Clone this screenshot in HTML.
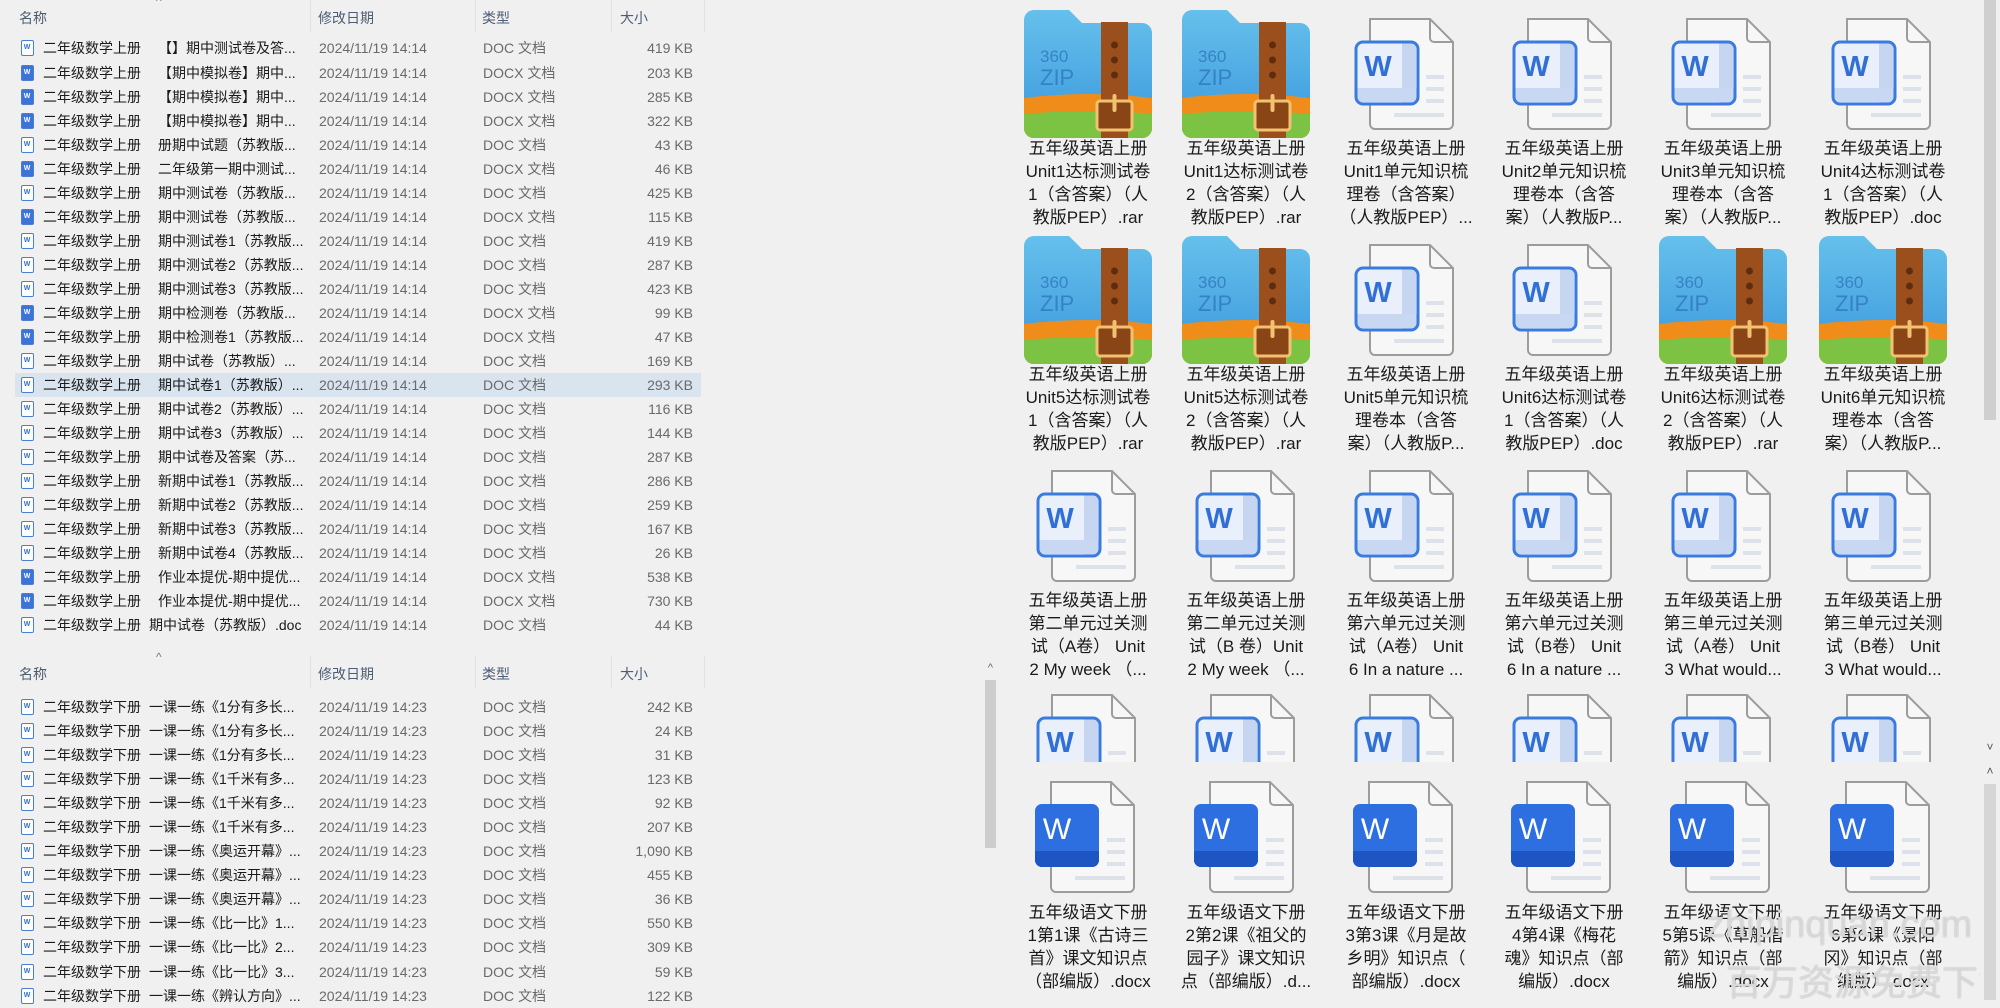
<!DOCTYPE html>
<html><head><meta charset="utf-8"><style>
*{margin:0;padding:0;box-sizing:border-box}
body{width:2000px;height:1000px;background:#f0f0f0;position:relative;overflow:hidden;font-family:"Liberation Sans","Noto Sans CJK SC",sans-serif}
.h{position:absolute;left:0;width:710px;height:34px;font-size:14px;color:#4d5d73}
.h span{position:absolute;top:8px}
.h b{position:absolute;top:0;width:1px;height:32px;background:#e2e2e2}
.h i{position:absolute;left:156px;top:-6px;font-style:normal;font-size:12px;color:#777}
.r{position:absolute;left:15px;width:686px;height:24px;font-size:14px;line-height:24px;white-space:nowrap}
.r.sel{background:#d9e4ee}
.r span{position:absolute;top:0}
.n1{left:28px;color:#1a1a1a}.n2{left:143px;color:#1a1a1a}
.dt{left:304px;color:#6a6a6a}.ty{left:468px;color:#6a6a6a}.sz{right:8px;color:#6a6a6a}
.ic{position:absolute;left:6px;top:4px;width:13px;height:16px;border:1.5px solid #4a7fd0;border-radius:2px;background:#fff}
.ic::after{content:"W";position:absolute;left:1px;top:2px;width:8px;height:9px;font:bold 7px/9px "Liberation Sans";color:#2f6fd6;text-align:center}
.ic.x{background:#3b74d6}.ic.x::after{color:#fff;background:#3b74d6}
.t{position:absolute;width:160px;text-align:center;font-size:17px;line-height:23px;color:#1a1a1a;white-space:nowrap}
.i{position:absolute}
</style></head><body>
<svg width="0" height="0" style="position:absolute">
<defs>
<linearGradient id="bg" x1="0" y1="0" x2="0" y2="1"><stop offset="0" stop-color="#66c0ec"/><stop offset="1" stop-color="#3a97dc"/></linearGradient>
<clipPath id="fc"><path d="M0 10a10 10 0 0 1 10-10H45L58 13H118a10 10 0 0 1 10 10V118a10 10 0 0 1-10 10H10a10 10 0 0 1-10-10Z"/></clipPath>
<symbol id="zip" viewBox="0 0 128 128">
<g clip-path="url(#fc)">
<rect width="128" height="128" fill="url(#bg)"/>
<path d="M0 88Q64 80 128 88V128H0Z" fill="#f08c1a"/>
<path d="M0 104Q64 98 128 104V128H0Z" fill="#7cc243"/>
</g>
<text x="16" y="52" font-family="Liberation Sans" font-size="17" fill="#2f78bd" opacity=".8">360</text>
<text x="16" y="75" font-family="Liberation Sans" font-size="22" fill="#2f78bd" opacity=".8">ZIP</text>
<rect x="77" y="12" width="27" height="116" fill="#9b4f1d"/>
<circle cx="90.5" cy="35" r="3.5" fill="#5e2c0e"/><circle cx="90.5" cy="50" r="3.5" fill="#5e2c0e"/><circle cx="90.5" cy="65" r="3.5" fill="#5e2c0e"/>
<rect x="73" y="91" width="35" height="29" rx="3" fill="#8a4516" stroke="#f2c270" stroke-width="3"/>
<rect x="88.5" y="84" width="4" height="18" rx="2" fill="#f2c270"/>
</symbol>
<symbol id="doc" viewBox="0 0 100 112">
<path d="M16 1H76L99 24V106a5 5 0 0 1-5 5H21a5 5 0 0 1-5-5Z" fill="#f7f7f7" stroke="#9c9c9c" stroke-width="2"/>
<path d="M76 1V20a4 4 0 0 0 4 4H99" fill="none" stroke="#9c9c9c" stroke-width="2"/>
<rect x="72" y="57" width="18" height="4" fill="#dde2ea"/><rect x="72" y="69" width="18" height="4" fill="#dde2ea"/><rect x="72" y="81" width="18" height="4" fill="#dde2ea"/><rect x="40" y="95" width="50" height="4" fill="#dde2ea"/>
<rect x="2" y="24" width="62" height="62" rx="7" fill="#eaf0fb"/>
<rect x="48" y="25.5" width="14" height="59" fill="#c6d6f1"/>
<rect x="3.5" y="70" width="59" height="14" fill="#c9d8f2"/>
<rect x="2" y="24" width="62" height="62" rx="7" fill="none" stroke="#3a7be0" stroke-width="3"/>
<text x="24" y="58" text-anchor="middle" font-family="Liberation Sans" font-weight="bold" font-size="29" fill="#2f6fd6">W</text>
</symbol>
<symbol id="docx" viewBox="0 0 100 112">
<path d="M16 1H76L99 24V106a5 5 0 0 1-5 5H21a5 5 0 0 1-5-5Z" fill="#f7f7f7" stroke="#9c9c9c" stroke-width="2"/>
<path d="M76 1V20a4 4 0 0 0 4 4H99" fill="none" stroke="#9c9c9c" stroke-width="2"/>
<rect x="72" y="57" width="18" height="4" fill="#dde2ea"/><rect x="72" y="69" width="18" height="4" fill="#dde2ea"/><rect x="72" y="81" width="18" height="4" fill="#dde2ea"/><rect x="40" y="95" width="50" height="4" fill="#dde2ea"/>
<rect x="0" y="23" width="64" height="63" rx="7" fill="#2d6fe0"/>
<path d="M0 70H64V79a7 7 0 0 1-7 7H7a7 7 0 0 1-7-7Z" fill="#1d55c3"/>
<text x="22" y="58" text-anchor="middle" font-family="Liberation Sans" font-size="30" fill="#fff">W</text>
</symbol>
</defs></svg>

<div class="h" style="top:0"><i>^</i><span style="left:19px">名称</span><span style="left:318px">修改日期</span><span style="left:482px">类型</span><span style="left:620px">大小</span><b style="left:310px"></b><b style="left:475px"></b><b style="left:611px"></b><b style="left:704px"></b></div>

<div class="r" style="top:36px"><i class="ic"></i><span class="n1">二年级数学上册</span><span class="n2">【】期中测试卷及答...</span><span class="dt">2024/11/19 14:14</span><span class="ty">DOC 文档</span><span class="sz">419 KB</span></div>
<div class="r" style="top:61px"><i class="ic x"></i><span class="n1">二年级数学上册</span><span class="n2">【期中模拟卷】期中...</span><span class="dt">2024/11/19 14:14</span><span class="ty">DOCX 文档</span><span class="sz">203 KB</span></div>
<div class="r" style="top:85px"><i class="ic x"></i><span class="n1">二年级数学上册</span><span class="n2">【期中模拟卷】期中...</span><span class="dt">2024/11/19 14:14</span><span class="ty">DOCX 文档</span><span class="sz">285 KB</span></div>
<div class="r" style="top:109px"><i class="ic x"></i><span class="n1">二年级数学上册</span><span class="n2">【期中模拟卷】期中...</span><span class="dt">2024/11/19 14:14</span><span class="ty">DOCX 文档</span><span class="sz">322 KB</span></div>
<div class="r" style="top:133px"><i class="ic"></i><span class="n1">二年级数学上册</span><span class="n2">册期中试题（苏教版...</span><span class="dt">2024/11/19 14:14</span><span class="ty">DOC 文档</span><span class="sz">43 KB</span></div>
<div class="r" style="top:157px"><i class="ic x"></i><span class="n1">二年级数学上册</span><span class="n2">二年级第一期中测试...</span><span class="dt">2024/11/19 14:14</span><span class="ty">DOCX 文档</span><span class="sz">46 KB</span></div>
<div class="r" style="top:181px"><i class="ic"></i><span class="n1">二年级数学上册</span><span class="n2">期中测试卷（苏教版...</span><span class="dt">2024/11/19 14:14</span><span class="ty">DOC 文档</span><span class="sz">425 KB</span></div>
<div class="r" style="top:205px"><i class="ic x"></i><span class="n1">二年级数学上册</span><span class="n2">期中测试卷（苏教版...</span><span class="dt">2024/11/19 14:14</span><span class="ty">DOCX 文档</span><span class="sz">115 KB</span></div>
<div class="r" style="top:229px"><i class="ic"></i><span class="n1">二年级数学上册</span><span class="n2">期中测试卷1（苏教版...</span><span class="dt">2024/11/19 14:14</span><span class="ty">DOC 文档</span><span class="sz">419 KB</span></div>
<div class="r" style="top:253px"><i class="ic"></i><span class="n1">二年级数学上册</span><span class="n2">期中测试卷2（苏教版...</span><span class="dt">2024/11/19 14:14</span><span class="ty">DOC 文档</span><span class="sz">287 KB</span></div>
<div class="r" style="top:277px"><i class="ic"></i><span class="n1">二年级数学上册</span><span class="n2">期中测试卷3（苏教版...</span><span class="dt">2024/11/19 14:14</span><span class="ty">DOC 文档</span><span class="sz">423 KB</span></div>
<div class="r" style="top:301px"><i class="ic x"></i><span class="n1">二年级数学上册</span><span class="n2">期中检测卷（苏教版...</span><span class="dt">2024/11/19 14:14</span><span class="ty">DOCX 文档</span><span class="sz">99 KB</span></div>
<div class="r" style="top:325px"><i class="ic x"></i><span class="n1">二年级数学上册</span><span class="n2">期中检测卷1（苏教版...</span><span class="dt">2024/11/19 14:14</span><span class="ty">DOCX 文档</span><span class="sz">47 KB</span></div>
<div class="r" style="top:349px"><i class="ic"></i><span class="n1">二年级数学上册</span><span class="n2">期中试卷（苏教版）...</span><span class="dt">2024/11/19 14:14</span><span class="ty">DOC 文档</span><span class="sz">169 KB</span></div>
<div class="r sel" style="top:373px"><i class="ic"></i><span class="n1">二年级数学上册</span><span class="n2">期中试卷1（苏教版）...</span><span class="dt">2024/11/19 14:14</span><span class="ty">DOC 文档</span><span class="sz">293 KB</span></div>
<div class="r" style="top:397px"><i class="ic"></i><span class="n1">二年级数学上册</span><span class="n2">期中试卷2（苏教版）...</span><span class="dt">2024/11/19 14:14</span><span class="ty">DOC 文档</span><span class="sz">116 KB</span></div>
<div class="r" style="top:421px"><i class="ic"></i><span class="n1">二年级数学上册</span><span class="n2">期中试卷3（苏教版）...</span><span class="dt">2024/11/19 14:14</span><span class="ty">DOC 文档</span><span class="sz">144 KB</span></div>
<div class="r" style="top:445px"><i class="ic"></i><span class="n1">二年级数学上册</span><span class="n2">期中试卷及答案（苏...</span><span class="dt">2024/11/19 14:14</span><span class="ty">DOC 文档</span><span class="sz">287 KB</span></div>
<div class="r" style="top:469px"><i class="ic"></i><span class="n1">二年级数学上册</span><span class="n2">新期中试卷1（苏教版...</span><span class="dt">2024/11/19 14:14</span><span class="ty">DOC 文档</span><span class="sz">286 KB</span></div>
<div class="r" style="top:493px"><i class="ic"></i><span class="n1">二年级数学上册</span><span class="n2">新期中试卷2（苏教版...</span><span class="dt">2024/11/19 14:14</span><span class="ty">DOC 文档</span><span class="sz">259 KB</span></div>
<div class="r" style="top:517px"><i class="ic"></i><span class="n1">二年级数学上册</span><span class="n2">新期中试卷3（苏教版...</span><span class="dt">2024/11/19 14:14</span><span class="ty">DOC 文档</span><span class="sz">167 KB</span></div>
<div class="r" style="top:541px"><i class="ic"></i><span class="n1">二年级数学上册</span><span class="n2">新期中试卷4（苏教版...</span><span class="dt">2024/11/19 14:14</span><span class="ty">DOC 文档</span><span class="sz">26 KB</span></div>
<div class="r" style="top:565px"><i class="ic x"></i><span class="n1">二年级数学上册</span><span class="n2">作业本提优-期中提优...</span><span class="dt">2024/11/19 14:14</span><span class="ty">DOCX 文档</span><span class="sz">538 KB</span></div>
<div class="r" style="top:589px"><i class="ic x"></i><span class="n1">二年级数学上册</span><span class="n2">作业本提优-期中提优...</span><span class="dt">2024/11/19 14:14</span><span class="ty">DOCX 文档</span><span class="sz">730 KB</span></div>
<div class="r" style="top:613px"><i class="ic"></i><span class="n1">二年级数学上册</span><span class="n2" style="left:134px">期中试卷（苏教版）.doc</span><span class="dt">2024/11/19 14:14</span><span class="ty">DOC 文档</span><span class="sz">44 KB</span></div>

<div class="h" style="top:656px"><i>^</i><span style="left:19px">名称</span><span style="left:318px">修改日期</span><span style="left:482px">类型</span><span style="left:620px">大小</span><b style="left:310px"></b><b style="left:475px"></b><b style="left:611px"></b><b style="left:704px"></b></div>

<div class="r" style="top:695px"><i class="ic"></i><span class="n1">二年级数学下册</span><span class="n2" style="left:134px">一课一练《1分有多长...</span><span class="dt">2024/11/19 14:23</span><span class="ty">DOC 文档</span><span class="sz">242 KB</span></div>
<div class="r" style="top:719px"><i class="ic"></i><span class="n1">二年级数学下册</span><span class="n2" style="left:134px">一课一练《1分有多长...</span><span class="dt">2024/11/19 14:23</span><span class="ty">DOC 文档</span><span class="sz">24 KB</span></div>
<div class="r" style="top:743px"><i class="ic"></i><span class="n1">二年级数学下册</span><span class="n2" style="left:134px">一课一练《1分有多长...</span><span class="dt">2024/11/19 14:23</span><span class="ty">DOC 文档</span><span class="sz">31 KB</span></div>
<div class="r" style="top:767px"><i class="ic"></i><span class="n1">二年级数学下册</span><span class="n2" style="left:134px">一课一练《1千米有多...</span><span class="dt">2024/11/19 14:23</span><span class="ty">DOC 文档</span><span class="sz">123 KB</span></div>
<div class="r" style="top:791px"><i class="ic"></i><span class="n1">二年级数学下册</span><span class="n2" style="left:134px">一课一练《1千米有多...</span><span class="dt">2024/11/19 14:23</span><span class="ty">DOC 文档</span><span class="sz">92 KB</span></div>
<div class="r" style="top:815px"><i class="ic"></i><span class="n1">二年级数学下册</span><span class="n2" style="left:134px">一课一练《1千米有多...</span><span class="dt">2024/11/19 14:23</span><span class="ty">DOC 文档</span><span class="sz">207 KB</span></div>
<div class="r" style="top:839px"><i class="ic"></i><span class="n1">二年级数学下册</span><span class="n2" style="left:134px">一课一练《奥运开幕》...</span><span class="dt">2024/11/19 14:23</span><span class="ty">DOC 文档</span><span class="sz">1,090 KB</span></div>
<div class="r" style="top:863px"><i class="ic"></i><span class="n1">二年级数学下册</span><span class="n2" style="left:134px">一课一练《奥运开幕》...</span><span class="dt">2024/11/19 14:23</span><span class="ty">DOC 文档</span><span class="sz">455 KB</span></div>
<div class="r" style="top:887px"><i class="ic"></i><span class="n1">二年级数学下册</span><span class="n2" style="left:134px">一课一练《奥运开幕》...</span><span class="dt">2024/11/19 14:23</span><span class="ty">DOC 文档</span><span class="sz">36 KB</span></div>
<div class="r" style="top:911px"><i class="ic"></i><span class="n1">二年级数学下册</span><span class="n2" style="left:134px">一课一练《比一比》1...</span><span class="dt">2024/11/19 14:23</span><span class="ty">DOC 文档</span><span class="sz">550 KB</span></div>
<div class="r" style="top:935px"><i class="ic"></i><span class="n1">二年级数学下册</span><span class="n2" style="left:134px">一课一练《比一比》2...</span><span class="dt">2024/11/19 14:23</span><span class="ty">DOC 文档</span><span class="sz">309 KB</span></div>
<div class="r" style="top:960px"><i class="ic"></i><span class="n1">二年级数学下册</span><span class="n2" style="left:134px">一课一练《比一比》3...</span><span class="dt">2024/11/19 14:23</span><span class="ty">DOC 文档</span><span class="sz">59 KB</span></div>
<div class="r" style="top:984px"><i class="ic"></i><span class="n1">二年级数学下册</span><span class="n2" style="left:134px">一课一练《辨认方向》...</span><span class="dt">2024/11/19 14:23</span><span class="ty">DOC 文档</span><span class="sz">122 KB</span></div>

<div style="position:absolute;left:983px;top:662px;width:15px;font-size:11px;color:#666;text-align:center">^</div>
<div style="position:absolute;left:985px;top:680px;width:11px;height:168px;background:#cdcdcd"></div>

<svg class="i" style="left:1024px;top:10px" width="128" height="128"><use href="#zip"/></svg>
<svg class="i" style="left:1182px;top:10px" width="128" height="128"><use href="#zip"/></svg>
<svg class="i" style="left:1354px;top:18px" width="100" height="112"><use href="#doc"/></svg>
<svg class="i" style="left:1512px;top:18px" width="100" height="112"><use href="#doc"/></svg>
<svg class="i" style="left:1671px;top:18px" width="100" height="112"><use href="#doc"/></svg>
<svg class="i" style="left:1831px;top:18px" width="100" height="112"><use href="#doc"/></svg>
<div class="t" style="left:1008px;top:137px">五年级英语上册<br>Unit1达标测试卷<br>1（含答案）（人<br>教版PEP）.rar</div>
<div class="t" style="left:1166px;top:137px">五年级英语上册<br>Unit1达标测试卷<br>2（含答案）（人<br>教版PEP）.rar</div>
<div class="t" style="left:1326px;top:137px">五年级英语上册<br>Unit1单元知识梳<br>理卷（含答案）<br>（人教版PEP）...</div>
<div class="t" style="left:1484px;top:137px">五年级英语上册<br>Unit2单元知识梳<br>理卷本（含答<br>案）（人教版P...</div>
<div class="t" style="left:1643px;top:137px">五年级英语上册<br>Unit3单元知识梳<br>理卷本（含答<br>案）（人教版P...</div>
<div class="t" style="left:1803px;top:137px">五年级英语上册<br>Unit4达标测试卷<br>1（含答案）（人<br>教版PEP）.doc</div>

<svg class="i" style="left:1024px;top:236px" width="128" height="128"><use href="#zip"/></svg>
<svg class="i" style="left:1182px;top:236px" width="128" height="128"><use href="#zip"/></svg>
<svg class="i" style="left:1354px;top:244px" width="100" height="112"><use href="#doc"/></svg>
<svg class="i" style="left:1512px;top:244px" width="100" height="112"><use href="#doc"/></svg>
<svg class="i" style="left:1659px;top:236px" width="128" height="128"><use href="#zip"/></svg>
<svg class="i" style="left:1819px;top:236px" width="128" height="128"><use href="#zip"/></svg>
<div class="t" style="left:1008px;top:363px">五年级英语上册<br>Unit5达标测试卷<br>1（含答案）（人<br>教版PEP）.rar</div>
<div class="t" style="left:1166px;top:363px">五年级英语上册<br>Unit5达标测试卷<br>2（含答案）（人<br>教版PEP）.rar</div>
<div class="t" style="left:1326px;top:363px">五年级英语上册<br>Unit5单元知识梳<br>理卷本（含答<br>案）（人教版P...</div>
<div class="t" style="left:1484px;top:363px">五年级英语上册<br>Unit6达标测试卷<br>1（含答案）（人<br>教版PEP）.doc</div>
<div class="t" style="left:1643px;top:363px">五年级英语上册<br>Unit6达标测试卷<br>2（含答案）（人<br>教版PEP）.rar</div>
<div class="t" style="left:1803px;top:363px">五年级英语上册<br>Unit6单元知识梳<br>理卷本（含答<br>案）（人教版P...</div>

<svg class="i" style="left:1036px;top:470px" width="100" height="112"><use href="#doc"/></svg>
<svg class="i" style="left:1195px;top:470px" width="100" height="112"><use href="#doc"/></svg>
<svg class="i" style="left:1354px;top:470px" width="100" height="112"><use href="#doc"/></svg>
<svg class="i" style="left:1512px;top:470px" width="100" height="112"><use href="#doc"/></svg>
<svg class="i" style="left:1671px;top:470px" width="100" height="112"><use href="#doc"/></svg>
<svg class="i" style="left:1831px;top:470px" width="100" height="112"><use href="#doc"/></svg>
<div class="t" style="left:1008px;top:589px">五年级英语上册<br>第二单元过关测<br>试（A卷） Unit<br>2 My week （...</div>
<div class="t" style="left:1166px;top:589px">五年级英语上册<br>第二单元过关测<br>试（B 卷）Unit<br>2 My week （...</div>
<div class="t" style="left:1326px;top:589px">五年级英语上册<br>第六单元过关测<br>试（A卷） Unit<br>6 In a nature ...</div>
<div class="t" style="left:1484px;top:589px">五年级英语上册<br>第六单元过关测<br>试（B卷） Unit<br>6 In a nature ...</div>
<div class="t" style="left:1643px;top:589px">五年级英语上册<br>第三单元过关测<br>试（A卷） Unit<br>3 What would...</div>
<div class="t" style="left:1803px;top:589px">五年级英语上册<br>第三单元过关测<br>试（B卷） Unit<br>3 What would...</div>

<div style="position:absolute;left:1000px;top:694px;width:970px;height:68px;overflow:hidden">
<svg class="i" style="left:36px;top:0" width="100" height="112"><use href="#doc"/></svg>
<svg class="i" style="left:195px;top:0" width="100" height="112"><use href="#doc"/></svg>
<svg class="i" style="left:354px;top:0" width="100" height="112"><use href="#doc"/></svg>
<svg class="i" style="left:512px;top:0" width="100" height="112"><use href="#doc"/></svg>
<svg class="i" style="left:671px;top:0" width="100" height="112"><use href="#doc"/></svg>
<svg class="i" style="left:831px;top:0" width="100" height="112"><use href="#doc"/></svg>
</div>

<svg class="i" style="left:1035px;top:781px" width="100" height="112"><use href="#docx"/></svg>
<svg class="i" style="left:1194px;top:781px" width="100" height="112"><use href="#docx"/></svg>
<svg class="i" style="left:1353px;top:781px" width="100" height="112"><use href="#docx"/></svg>
<svg class="i" style="left:1511px;top:781px" width="100" height="112"><use href="#docx"/></svg>
<svg class="i" style="left:1670px;top:781px" width="100" height="112"><use href="#docx"/></svg>
<svg class="i" style="left:1830px;top:781px" width="100" height="112"><use href="#docx"/></svg>
<div class="t" style="left:1008px;top:901px">五年级语文下册<br>1第1课《古诗三<br>首》课文知识点<br>（部编版）.docx</div>
<div class="t" style="left:1166px;top:901px">五年级语文下册<br>2第2课《祖父的<br>园子》课文知识<br>点（部编版）.d...</div>
<div class="t" style="left:1326px;top:901px">五年级语文下册<br>3第3课《月是故<br>乡明》知识点（<br>部编版）.docx</div>
<div class="t" style="left:1484px;top:901px">五年级语文下册<br>4第4课《梅花<br>魂》知识点（部<br>编版）.docx</div>
<div class="t" style="left:1643px;top:901px">五年级语文下册<br>5第5课《草船借<br>箭》知识点（部<br>编版）.docx</div>
<div class="t" style="left:1803px;top:901px">五年级语文下册<br>6第6课《景阳<br>冈》知识点（部<br>编版）.docx</div>

<div style="position:absolute;left:1706px;top:904px;font-size:38px;color:rgba(255,255,255,.6);text-shadow:0 0 1px #999;white-space:nowrap">zhipinquan.com</div>
<div style="position:absolute;left:1726px;top:954px;font-size:36px;color:rgba(255,255,255,.6);text-shadow:0 0 1px #999;white-space:nowrap">百万资源免费下载</div>

<div style="position:absolute;left:1980px;top:0;width:20px;height:1000px;background:#f0f0f0"></div>
<div style="position:absolute;left:1984px;top:0;width:12px;height:420px;background:#cfcfcf"></div>
<div style="position:absolute;left:1980px;top:740px;width:20px;font-size:12px;color:#555;text-align:center">˅</div>
<div style="position:absolute;left:1980px;top:764px;width:20px;font-size:12px;color:#555;text-align:center">˄</div>
<div style="position:absolute;left:1984px;top:784px;width:12px;height:216px;background:#d6d6d6"></div>
</body></html>
